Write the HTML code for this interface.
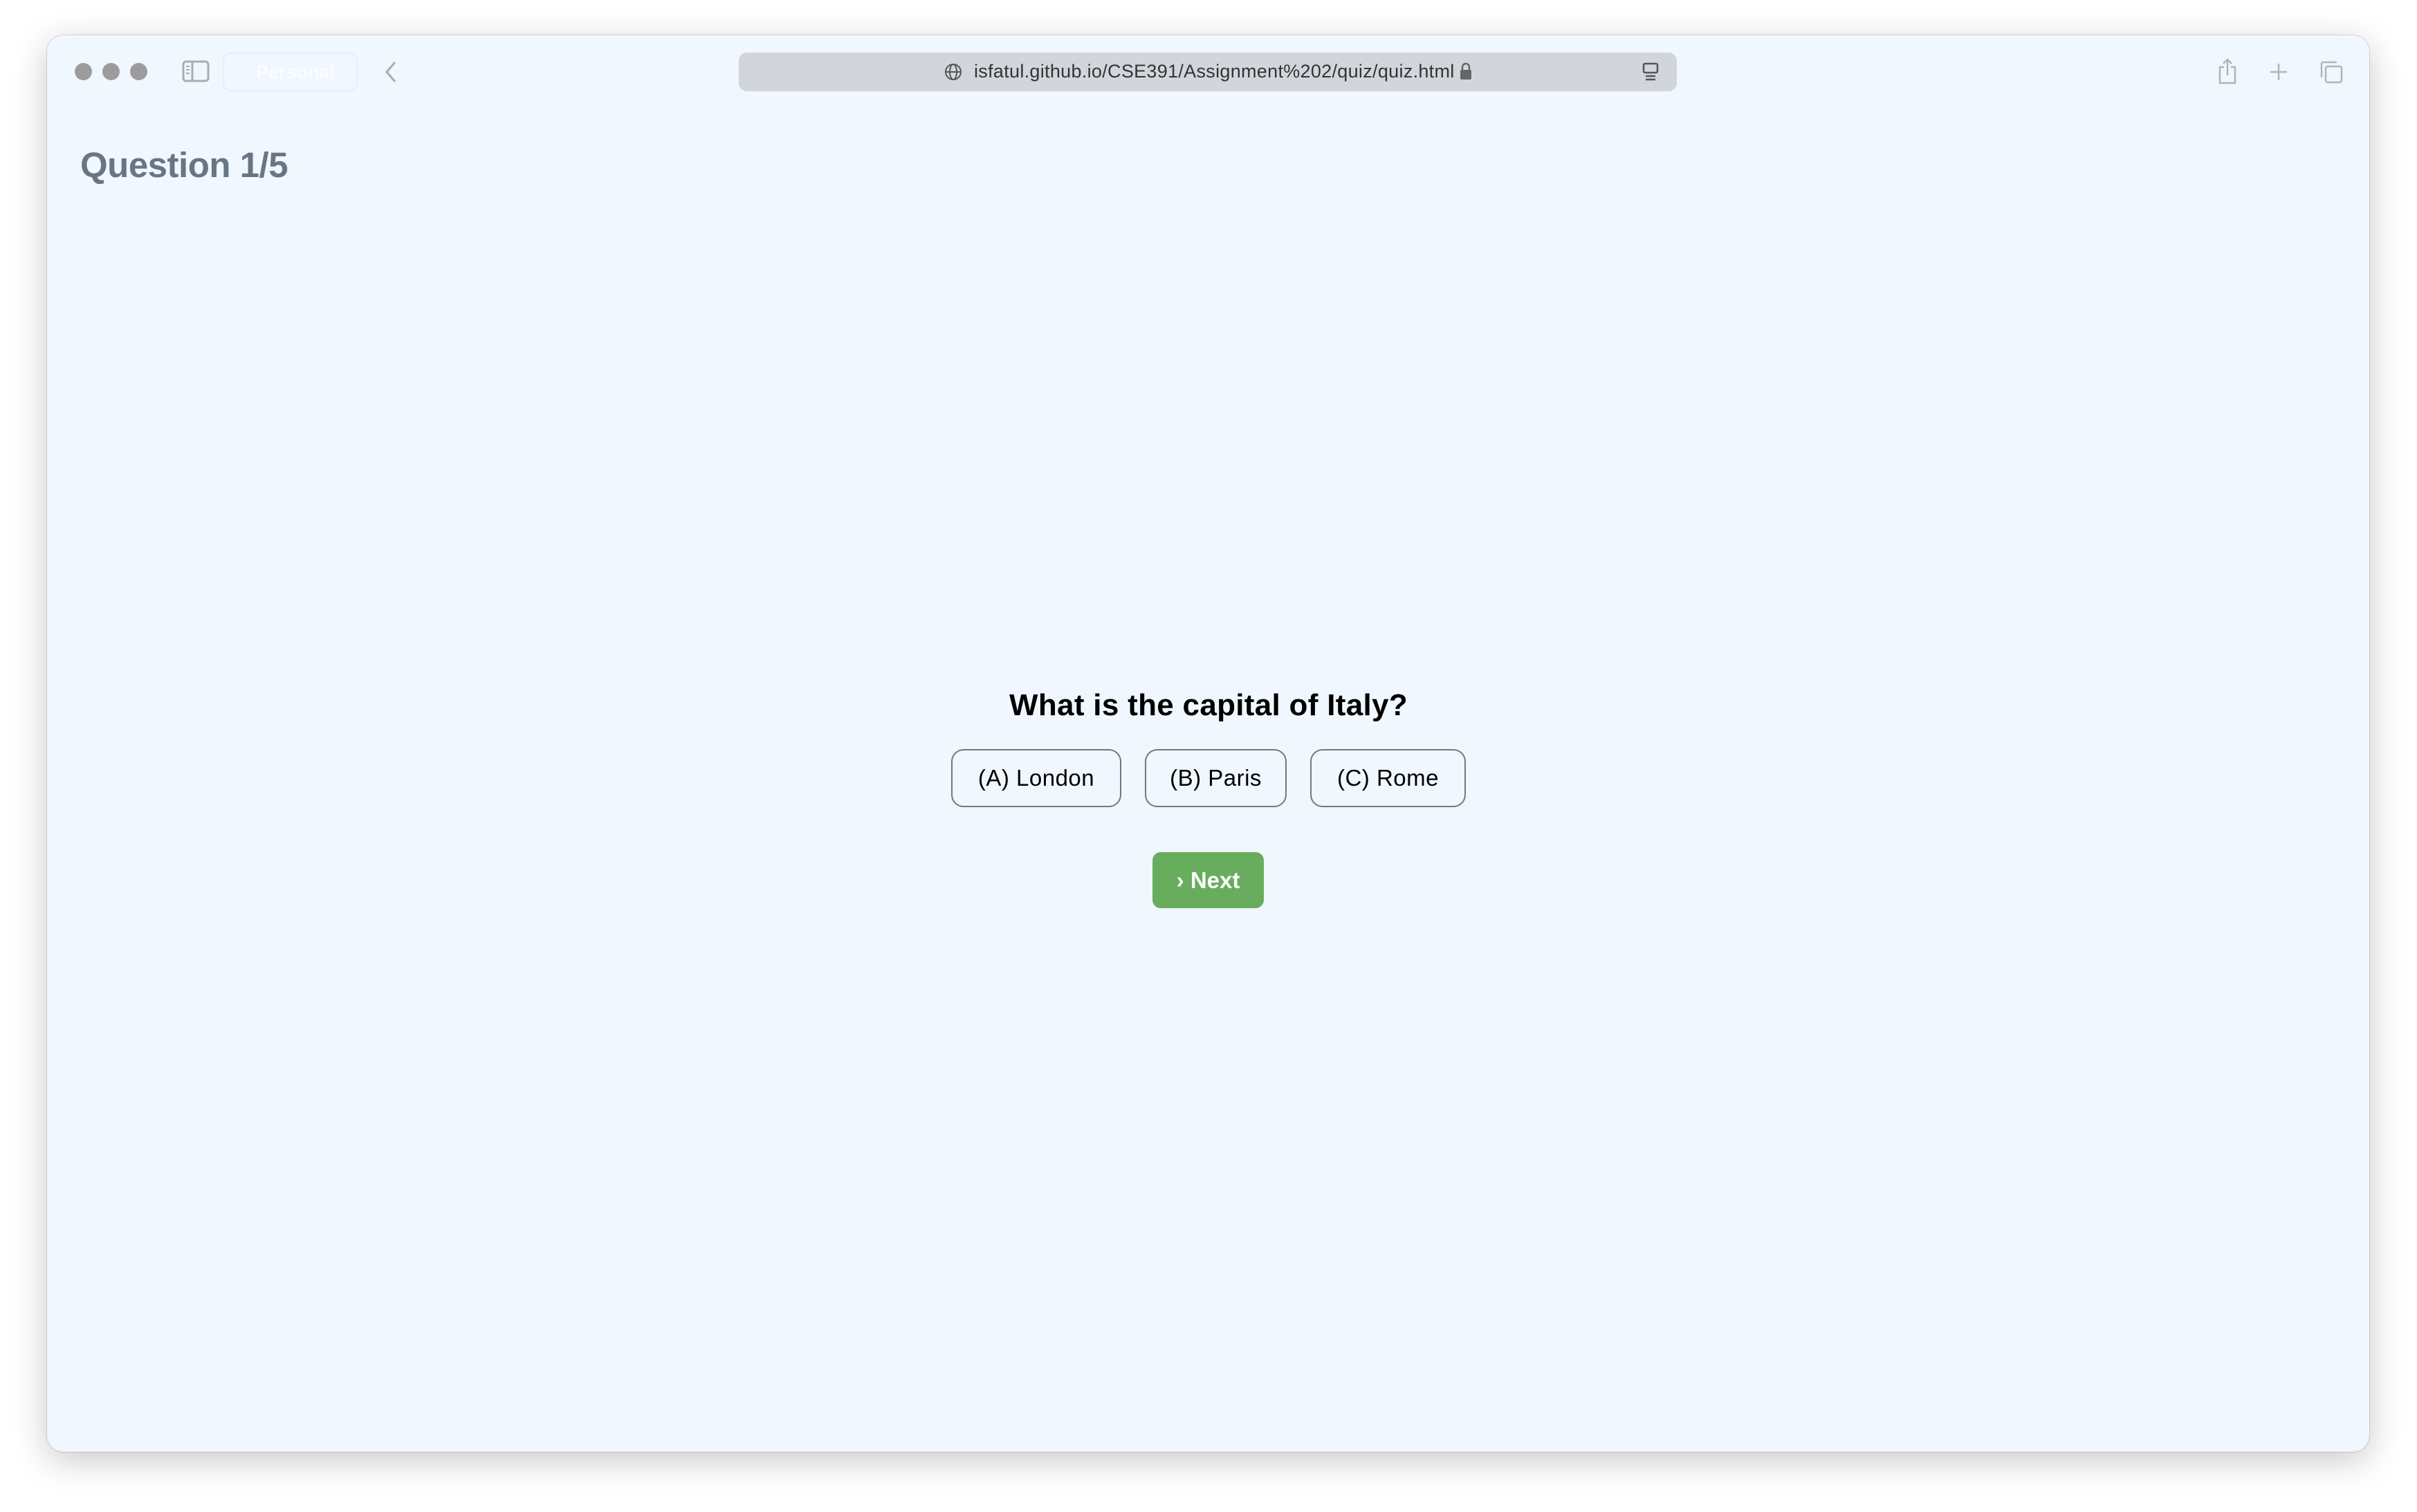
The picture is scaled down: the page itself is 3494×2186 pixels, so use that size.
<!DOCTYPE html>
<html><head><meta charset="utf-8"><style>
html,body{margin:0;padding:0;width:3494px;height:2186px;background:#fff;overflow:hidden;font-family:"Liberation Sans",sans-serif}
.win{position:absolute;left:68px;top:51px;width:3357px;height:2048px;background:#f0f7fe;border-radius:24px;box-shadow:0 12px 50px rgba(0,0,0,.22),0 0 0 1px rgba(0,0,0,.12)}
.dot{position:absolute;top:91px;width:25px;height:25px;border-radius:50%;background:#9c9c9e}
.url{position:absolute;left:1068px;top:76px;width:1356px;height:56px;background:#d2d6dc;border-radius:12px}
.urltext{position:absolute;left:1408px;top:88px;font-size:27px;letter-spacing:0.3px;color:#333}
h1{position:absolute;left:116px;top:209px;margin:0;font-size:51px;font-weight:bold;color:#687585;letter-spacing:-0.5px}
.q{position:absolute;left:0;width:3494px;top:995px;text-align:center;font-size:44px;font-weight:bold;color:#000;letter-spacing:0.3px}
.b{position:absolute;top:1083px;border:2px solid #777;border-radius:18px;box-sizing:border-box;height:84px;font-size:33px;line-height:80px;text-align:center;color:#000;letter-spacing:0.5px}
.next{position:absolute;left:1666px;top:1232px;width:161px;height:81px;background:#68ad5e;border-radius:12px;color:#fff;font-weight:bold;font-size:33px;line-height:81px;text-align:center}
</style></head><body>
<div class="win"></div>
<div class="dot" style="left:108px"></div>
<div class="dot" style="left:148px"></div>
<div class="dot" style="left:188px"></div>
<svg style="position:absolute;left:263px;top:87px" width="40" height="32" viewBox="0 0 40 32"><rect x="2" y="2" width="36" height="28" rx="4" fill="none" stroke="#a8adb4" stroke-width="3"/><line x1="15" y1="2" x2="15" y2="30" stroke="#a8adb4" stroke-width="3"/><line x1="6" y1="9" x2="11" y2="9" stroke="#a8adb4" stroke-width="2"/><line x1="6" y1="14" x2="11" y2="14" stroke="#a8adb4" stroke-width="2"/><line x1="6" y1="19" x2="11" y2="19" stroke="#a8adb4" stroke-width="2"/></svg>
<div style="position:absolute;left:322px;top:76px;width:195px;height:56px;border:2px solid #e8eef6;border-radius:12px;box-sizing:border-box;color:#fbfdff;font-size:27px;font-weight:bold;line-height:52px;padding-left:46px">Personal</div>
<svg style="position:absolute;left:555px;top:88px" width="20" height="32" viewBox="0 0 20 32"><path d="M16 2 L4 16 L16 30" fill="none" stroke="#a8adb4" stroke-width="3"/></svg>
<div class="url"></div>
<svg style="position:absolute;left:1365px;top:91px" width="26" height="26" viewBox="0 0 26 26"><circle cx="13" cy="13" r="11" fill="none" stroke="#555" stroke-width="2"/><ellipse cx="13" cy="13" rx="5" ry="11" fill="none" stroke="#555" stroke-width="2"/><line x1="2" y1="13" x2="24" y2="13" stroke="#555" stroke-width="2"/></svg>
<div class="urltext">isfatul.github.io/CSE391/Assignment%202/quiz/quiz.html</div>
<svg style="position:absolute;left:2110px;top:90px" width="18" height="26" viewBox="0 0 18 26"><path d="M4 11 V7 a5 5 0 0 1 10 0 V11" fill="none" stroke="#666" stroke-width="2.5"/><rect x="1" y="11" width="16" height="14" rx="2" fill="#666"/></svg>
<svg style="position:absolute;left:2374px;top:90px" width="24" height="28" viewBox="0 0 24 28"><rect x="2" y="2" width="20" height="13" rx="2" fill="none" stroke="#555" stroke-width="2.5"/><line x1="5" y1="20" x2="19" y2="20" stroke="#555" stroke-width="2.5"/><line x1="5" y1="25" x2="19" y2="25" stroke="#555" stroke-width="2.5"/></svg>
<svg style="position:absolute;left:3205px;top:83px" width="30" height="40" viewBox="0 0 30 40"><path d="M10 14 H4 V37 H26 V14 H20 M15 26 V3 M9 9 L15 3 L21 9" fill="none" stroke="#b0b5bc" stroke-width="2.5"/></svg>
<svg style="position:absolute;left:3280px;top:90px" width="28" height="28" viewBox="0 0 28 28"><path d="M14 2 V26 M2 14 H26" stroke="#b0b5bc" stroke-width="2.5"/></svg>
<svg style="position:absolute;left:3352px;top:86px" width="36" height="36" viewBox="0 0 36 36"><rect x="10" y="10" width="23" height="23" rx="3" fill="none" stroke="#b0b5bc" stroke-width="2.5"/><path d="M4 26 V6 a2 2 0 0 1 2 -2 H26" fill="none" stroke="#b0b5bc" stroke-width="2.5"/></svg>
<h1>Question 1/5</h1>
<div class="q">What is the capital of Italy?</div>
<div class="b" style="left:1375px;width:246px">(A) London</div>
<div class="b" style="left:1655px;width:205px">(B) Paris</div>
<div class="b" style="left:1894px;width:225px">(C) Rome</div>
<div class="next">› Next</div>
</body></html>
